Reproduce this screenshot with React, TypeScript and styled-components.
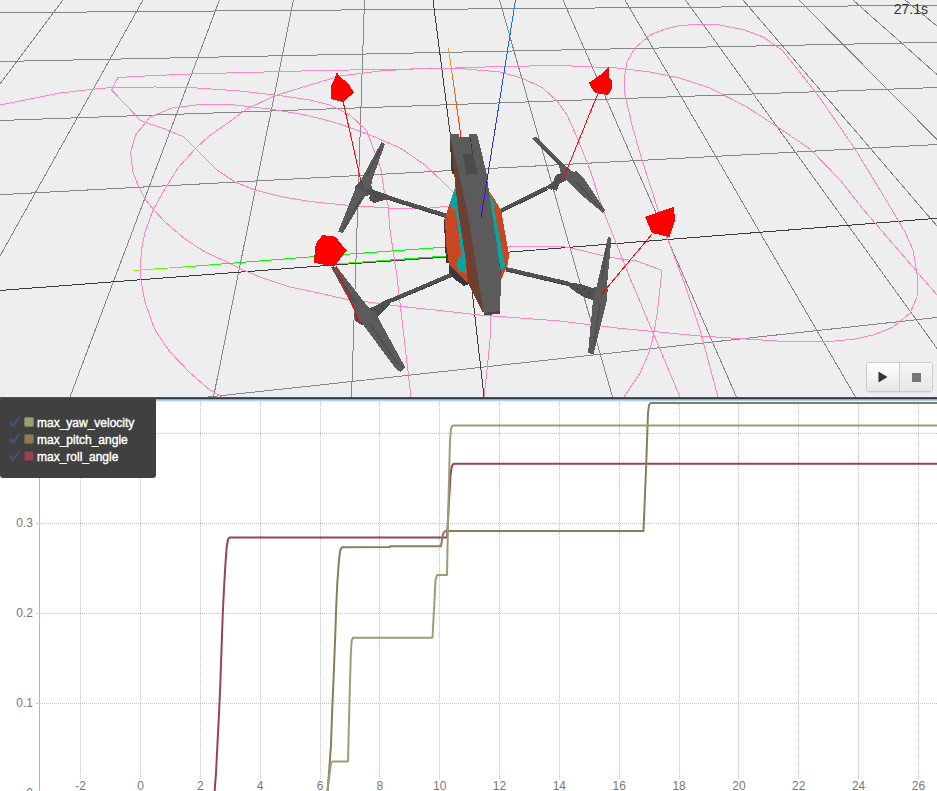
import React from 'react';
import styled, { createGlobalStyle } from 'styled-components';

const GlobalStyle = createGlobalStyle`
  * { box-sizing: border-box; }
  body { margin: 0; background: #fff; overflow: hidden; font-family: "Liberation Sans", Arial, sans-serif; }
`;

const Page = styled.main`
  display: flex;
  flex-direction: column;
  width: 937px;
  height: 791px;
`;

const Viewport = styled.section`
  position: relative;
  height: 397px;
  flex: none;
  background: #eee;
`;

const Scene = styled.svg`
  display: block;
  shape-rendering: crispEdges;
`;

const Clock = styled.div`
  position: absolute;
  top: 1px;
  right: 9px;
  font-size: 14px;
  line-height: 16px;
  color: #333;
`;

const Controls = styled.div`
  position: absolute;
  right: 4px;
  bottom: 5px;
  display: flex;
  width: 67px;
  height: 30px;
  border: 1px solid #ccc;
  border-radius: 3px;
  overflow: hidden;
  box-shadow: 0 1px 1px rgba(0, 0, 0, 0.05);
`;

const ControlButton = styled.button<{ $idle?: boolean }>`
  flex: 1;
  display: flex;
  align-items: center;
  justify-content: center;
  padding: 0;
  border: 0;
  border-left: ${(p) => (p.$idle ? '1px solid #ccc' : '0')};
  background: ${(p) =>
    p.$idle ? 'linear-gradient(#f5f5f5, #e7e7e7)' : 'linear-gradient(#fff, #e6e6e6)'};
  color: ${(p) => (p.$idle ? '#777' : '#333')};
`;

const Divider = styled.div`
  flex: none;
  height: 5px;
  background: linear-gradient(
    #38586e 0 1px, #333b42 1px 2px, #6fb0ec 2px 3px, #a9d3fa 3px 4px, #e3f1fd 4px 5px
  );
`;

const ChartPanel = styled.section`
  position: relative;
  flex: 1;
  min-height: 0;
`;

const Plot = styled.svg`
  display: block;
  font: 12px "Liberation Sans", Arial, sans-serif;
`;

const Legend = styled.ul`
  position: absolute;
  top: -4px;
  left: 0;
  display: flex;
  flex-direction: column;
  width: 156px;
  height: 80px;
  margin: 0;
  padding: 16px 8px 13px;
  border-radius: 3px;
  background: #404040;
  list-style: none;
`;

const LegendItem = styled.li`
  display: flex;
  align-items: center;
  height: 17px;
  color: #fff;
  font-size: 12px;
  -webkit-text-stroke: 0.4px #fff;
`;

const Check = styled.svg`
  width: 13px;
  height: 12px;
  margin: -1px 3px 0 0;
`;

const Swatch = styled.span<{ $color: string }>`
  width: 10px;
  height: 10px;
  margin: -2px 3px 0 0;
  border: 1px solid rgba(0, 0, 0, 0.2);
  border-radius: 2px;
  background: ${(p) => p.$color};
`;

const gridLines = [
  '0,12.7 937,5.3', '0,61.5 937,42.3', '0,120.5 937,87.5', '0,194.7 937,144.5', '208,397 320,385 630,351 937,317.5',
  '63,0 0,84', '143,0 0,256', '219.5,0 70,397', '293.5,0 213.5,397', '364.5,0 351.5,397',
  '499.5,0 612.5,397', '563,0 736.5,397', '625,0 855.5,397', '685.5,0 937,348.5',
  '743,0 937,226', '799,0 937,139.5', '853,0 937,74.5', '905,0 937,26',
];

const trails = [
  '0,105 33,98.5 60,93 95,89 112,87.5 155,87 190,87.5 240,91 283,96 310,100 330,105 350,115 367,131 372,145 381,170 384,190 388,205 390,230 397,277 411,397',
  '450,206 430,208 395,208.5 345,205 310,201.5 283,197 255,190 235,182 217,170 195,148 184,137 165,129 147,123 140,120 126,105 111.5,90 118,77.5 145,76 190,74 320,70.5 440,68.5 500,66.5 560,65.5 617,68 650,72 680,78 710,88 747,107 782,130 810,149 840,180 863,209 937,295',
  '680,397 630,278 603,210 590,170 577,137 567,115 557,101 543,88 522,78 500,72 460,68.5 430,68 380,71 340,76 310,85 290,91 274,96 245,110 232,120 209,136 195,149 178,168 166,187 153,210 145,232 141.5,250 140.5,265 141,280 145,302 155,330 170,352 190,373 210,390 222,397',
  '453,192 443,182 425,165 400,148 370,135 340,124 320,118.5 300,114 270,109 235,105 200,104.5 172,108 150,117 135.5,135 130.5,153 133,172 138,185 145,199 154,210 165,222 185,239 205,252 225,261 243,270 260,277 290,287 310,291 345,299 398,306 480,315 560,321 617,328 700,336 785,341.5 830,341.5 855,339 875,334.5 893,327 910,313 917,297 917.5,277 913,250 905,232 892,210 880,190 855,149 820,98 798,70 782,50 763,37 745,30 720,25 705,24 680,25.5 665,29 650,35 635,48 627,62 624.5,77 625,95 632,125 642,160 658,210 668,240 685,285 700,330 718,397',
  '505,246 560,246 580,250 600,255 617,258.5 637,261 662,270.5 657,315 652,342 648,355 640,373 624,397',
  '491,316 490,340 487,370 484,397',
];

const propellers = [
  '381.5,142 385,144 372,180 371,188 364,190 362,178', '356,187 367,193 343,233 338,232',
  '532,138 536,137 568,168 576,174 562,178 559,166', '562,176 576,171 585,180 605,210 603,213 585,198',
  '331,267 337,267 365,303 374,314 360,322 355,311', '364,309 375,312 405,367 401,372 396,369 361,322',
  '608,237 611.5,238 607,285 607,300 593.5,354.5 588,353 593,300 597,285',
];

const hubs = [
  '355,187 361,180 370,182 373,190 388,195 392,199 380,201 374,203 369,199 370,195 362,197 355,193',
  '544,188 553,182 556,175 564,172 569,179 559,184 557,191 551,189',
  '396,297 388,299 373,307 354,313 355,321 362,325 370,324 373,317 377,318 390,304',
  '567,282 580,284 593,288 604,284 608,290 606,300 593,300 586,298 577,293 568,286',
];

const arrows = [
  '336.7,72 340,77 348,83 354,92.7 343,102 330.7,99 330.7,87 334,80',
  '608.7,67 609.5,78 612,80 611.7,89 608,95 595,93 591.7,88 589,82.7 600,75',
  '322.7,235 335,236.7 338,240 346.7,250.7 334,266.7 314,262.7 315,248 317,241.7',
  '674,207 675,220 669.7,237 652,233 645,217 658.7,212',
];

const speckles = [
  [373, 192], [375, 196], [377, 194], [379, 198], [382, 196], [370, 200], [555, 182], [557, 185],
  [553, 187], [558, 180], [551, 189], [375, 309], [378, 313], [373, 316], [381, 306], [383, 308],
  [577, 288], [580, 291], [584, 288], [588, 293], [586, 296], [357, 319], [361, 322],
];

function Drone() {
  return (
    <g>
      <path stroke="#525252" strokeWidth="4" d="M388 197.5L446 215.5M500 211L547 188M453 274L392 300M506 269L570 284" />
      <path stroke="#414141" d="M388 199.5L446 217.5M500 213L547 190M453 276L392 302M506 271L570 286" />
      <g fill="#505050">
        {hubs.map((p) => <polygon key={p} points={p} />)}
      </g>
      <g fill="#5b5b5b">
        {propellers.map((p) => <polygon key={p} points={p} />)}
      </g>
      <path
        stroke="#4d4d4d"
        strokeWidth="1.5"
        d="M380 149L367 176M363 195L344 228M576 182L600 208M541 145L560 165M370 324L398 364M335 272L356 303M607 245L602 280M600 304L594 345"
      />
      <g fill="#303030">
        {speckles.map(([x, y]) => <rect key={`${x}-${y}`} x={x} y={y} width="1" height="1" />)}
      </g>
      <polygon fill="#3b3b3b" points="450,136 451,167 452,174 456,174 453,145" />
      <polygon fill="#383838" points="445,216 444,223 446,263 449,263 449,272 453,278 464,286 469,284 452,258" />
      <polygon fill="#ca4623" points="455,190 450,203 445,217 446,243 449,264 467,283 469,280 461,210" />
      <polygon fill="#ca4623" points="489,191 495,200 501,210 509,255 508,264 501,280 501,298 494,250" />
      <polygon fill="#05a6a4" points="455.7,185 450,203 451.7,211 455,208 457,220 461.7,257 457.7,258 457.3,267 459,271.7 465.7,272.7 466,260 460,210" />
      <polygon fill="#05a6a4" points="489,191 491,196 495,206 494,208 505,266 501,271 498,260 490,205" />
      <polygon fill="#713727" points="489,200 501,272 501,298 492,260" />
      <polygon fill="url(#side)" points="450.5,138 455,182 458,210 466,262 468,283 483,313 486,308 470,205 459,160" />
      <polygon fill="#5b5b5b" points="450,134.5 458.5,134 459.5,137 469,137 469,134 477,133.5 486.5,173 489,192 498,252 501,280 500,312 484,314 467,210 453,148 450,138" />
      <polygon fill="#464646" points="484,313 500,311 500,314 484,315" />
      <polygon fill="#4b4b4b" points="463,154 473,154 478,173.5 466,174.7" />
      <path d="M470 138L472.5 154" stroke="#333" strokeDasharray="4 2" />
    </g>
  );
}

function FlightScene() {
  return (
    <Scene width="937" height="397" viewBox="0 0 937 397" fill="none">
      <defs>
        <linearGradient id="left" x1="133" x2="230" y1="0" y2="0" gradientUnits="userSpaceOnUse">
          <stop stopColor="#95ff00" /><stop offset="1" stopColor="#0f0" />
        </linearGradient>
        <linearGradient id="near" x1="338" x2="400" y1="0" y2="0" gradientUnits="userSpaceOnUse">
          <stop stopColor="#90e000" /><stop offset="1" stopColor="#0f0" />
        </linearGradient>
        <linearGradient id="front" x1="0" x2="0" y1="48" y2="137" gradientUnits="userSpaceOnUse">
          <stop stopColor="#ffa800" /><stop offset="1" stopColor="#f20" />
        </linearGradient>
        <linearGradient id="up" x1="0" x2="0" y1="0" y2="218" gradientUnits="userSpaceOnUse">
          <stop stopColor="#0085ff" /><stop offset="1" stopColor="#3b00ee" />
        </linearGradient>
        <linearGradient id="side" x1="455" x2="477" y1="230" y2="226" gradientUnits="userSpaceOnUse">
          <stop stopColor="#803923" /><stop offset="1" stopColor="#5a4640" />
        </linearGradient>
      </defs>
      <g stroke="#868686">{gridLines.map((p) => <polyline key={p} points={p} />)}</g>
      <path stroke="#3c3c3c" d="M0 290.5L320 266L450 256.8L630 242.5L937 218.3M433 0L451 140L472 290L484 397" />
      <g stroke="#ff83c5">{trails.map((p) => <polyline key={p} points={p} />)}</g>
      <path stroke="url(#left)" d="M133 270.5L190 266.5L315 256.5L447 247" />
      <path stroke="url(#near)" d="M336 263.9L448 255.9" />
      <Drone />
      <path stroke="url(#front)" d="M448.5 48L461 137" />
      <path stroke="url(#up)" d="M515.5 0L481 218" />
      <path stroke="#f00" d="M343 101L362 186M597.7 94L564 177M336 266L359 320.7M652 234L601 295" />
      <g fill="#f00">{arrows.map((p) => <polygon key={p} points={p} />)}</g>
    </Scene>
  );
}

const series = [
  { name: 'max_roll_angle', color: '#96435a', points: '214.5,793 216,773 217,753 218.7,720 220.2,687 221.5,650 222.8,613 224.2,585 225.5,563 226.7,547 228,539.5 229.5,537.5 447,537.5 448.5,510 450.5,475 451.7,467 453,464.2 455,463.7 937,463.7' },
  { name: 'max_pitch_angle', color: '#8b7d59', points: '327.5,793 329.7,763 331,745 332.2,710 333.5,680 335.2,637 336.2,607 337.3,583 339,560 340.2,550.5 341.8,547.2 390,547 390,546.2 441,546.2 443,534 444.5,531.5 446,531 643.5,531 646,470 648,413 649,405 650.5,403 937,403' },
  { name: 'max_yaw_velocity', color: '#98a073', points: '327,793 330.2,769 331,763 332.5,761.5 348,761.5 349.5,700 350.8,655 351.6,641 353,637.7 432.5,637.7 434.5,600 435.5,580 437,575 447,575 448.5,500 450,440 451,429 452,426 454,425.5 937,425.5' },
];

const xTicks = Array.from({ length: 15 }, (_, i) => i * 2 - 2);
const yTicks = [0, 1, 2, 3, 4];

function MaxChart() {
  return (
    <Plot width="937" height="389" viewBox="0 402 937 389" fill="none">
      <g stroke="#c2c2c2" strokeDasharray="1 1">
        {xTicks.map((t) => {
          const x = Math.round(140 + t * 29.92) + 0.5;
          return <path key={t} d={`M${x} 402V779`} />;
        })}
        {yTicks.map((t) => <path key={t} d={`M40 ${793.5 - t * 90}H937`} />)}
      </g>
      <path d="M39.5 402V791" stroke="#b5b5b5" />
      {yTicks.map((t) => <path key={t} d={`M36 ${793.5 - t * 90}h4`} stroke="#ccc" />)}
      <g fill="#777">
        {yTicks.slice(0, 4).map((t) => (
          <text key={t} x="33" y={797 - t * 90} textAnchor="end">{t === 0 ? '0' : `0.${t}`}</text>
        ))}
      </g>
      {series.map((s) => (
        <polyline key={s.name} points={s.points} stroke={s.color} strokeWidth="2" strokeLinejoin="round" />
      ))}
      <g fill="#777" textAnchor="middle">
        {xTicks.map((t) => <text key={t} x={140.5 + t * 29.92} y="790">{t}</text>)}
      </g>
    </Plot>
  );
}

export default function App() {
  return (
    <>
      <GlobalStyle />
      <Page>
        <Viewport>
          <FlightScene />
          <Clock>27.1s</Clock>
          <Controls>
            <ControlButton aria-label="Play">
              <svg width="10" height="12"><path d="M0.5 0.5L9.5 6L0.5 11.5Z" fill="currentColor" /></svg>
            </ControlButton>
            <ControlButton $idle disabled aria-label="Stop">
              <svg width="9" height="9"><path d="M0 0H9V9H0Z" fill="currentColor" /></svg>
            </ControlButton>
          </Controls>
        </Viewport>
        <Divider />
        <ChartPanel>
          <MaxChart />
          <Legend>
            {[...series].reverse().map((s) => (
              <LegendItem key={s.name}>
                <Check viewBox="0 0 13 12"><path d="M0.8 6.8L3.2 5L5.2 7.2L10.8 0.8H12.6L5.8 11H4Z" fill="#3d566e" /></Check>
                <Swatch $color={s.color} />
                {s.name}
              </LegendItem>
            ))}
          </Legend>
        </ChartPanel>
      </Page>
    </>
  );
}
